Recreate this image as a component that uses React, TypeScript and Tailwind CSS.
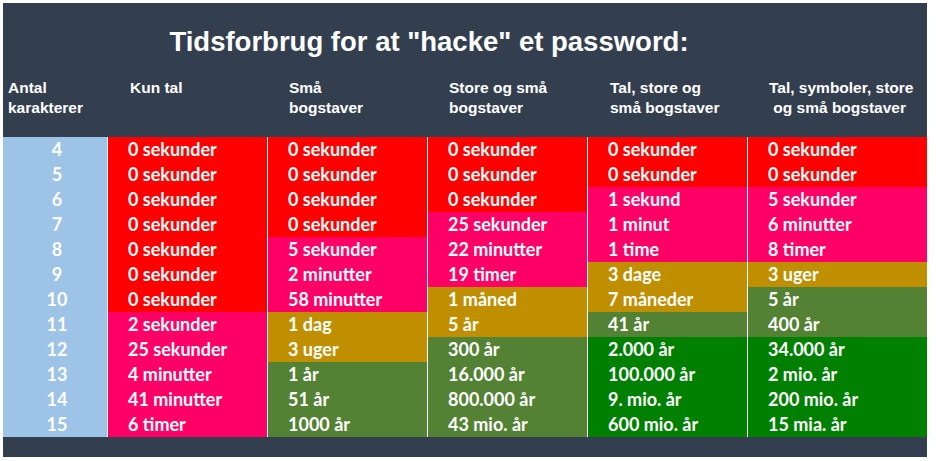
const R = 'bg-[#ff0000]';
const P = 'bg-[#ff0066]';
const G = 'bg-[#bf8f00]';
const O = 'bg-[#548235]';
const N = 'bg-[#008000]';

type Cell = { text: string; bg: string };

const COLUMNS: { width: string; cells: Cell[] }[] = [
    {
        width: 'w-[160px]',
        cells: [
            { text: '0 sekunder', bg: R },
            { text: '0 sekunder', bg: R },
            { text: '0 sekunder', bg: R },
            { text: '0 sekunder', bg: R },
            { text: '0 sekunder', bg: R },
            { text: '0 sekunder', bg: R },
            { text: '0 sekunder', bg: R },
            { text: '2 sekunder', bg: P },
            { text: '25 sekunder', bg: P },
            { text: '4 minutter', bg: P },
            { text: '41 minutter', bg: P },
            { text: '6 timer', bg: P },
        ],
    },
    {
        width: 'w-[160px]',
        cells: [
            { text: '0 sekunder', bg: R },
            { text: '0 sekunder', bg: R },
            { text: '0 sekunder', bg: R },
            { text: '0 sekunder', bg: R },
            { text: '5 sekunder', bg: P },
            { text: '2 minutter', bg: P },
            { text: '58 minutter', bg: P },
            { text: '1 dag', bg: G },
            { text: '3 uger', bg: G },
            { text: '1 år', bg: O },
            { text: '51 år', bg: O },
            { text: '1000 år', bg: O },
        ],
    },
    {
        width: 'w-[160px]',
        cells: [
            { text: '0 sekunder', bg: R },
            { text: '0 sekunder', bg: R },
            { text: '0 sekunder', bg: R },
            { text: '25 sekunder', bg: P },
            { text: '22 minutter', bg: P },
            { text: '19 timer', bg: P },
            { text: '1 måned', bg: G },
            { text: '5 år', bg: G },
            { text: '300 år', bg: O },
            { text: '16.000 år', bg: O },
            { text: '800.000 år', bg: O },
            { text: '43 mio. år', bg: O },
        ],
    },
    {
        width: 'w-[160px]',
        cells: [
            { text: '0 sekunder', bg: R },
            { text: '0 sekunder', bg: R },
            { text: '1 sekund', bg: P },
            { text: '1 minut', bg: P },
            { text: '1 time', bg: P },
            { text: '3 dage', bg: G },
            { text: '7 måneder', bg: G },
            { text: '41 år', bg: O },
            { text: '2.000 år', bg: N },
            { text: '100.000 år', bg: N },
            { text: '9. mio. år', bg: N },
            { text: '600 mio. år', bg: N },
        ],
    },
    {
        width: 'w-[180px]',
        cells: [
            { text: '0 sekunder', bg: R },
            { text: '0 sekunder', bg: R },
            { text: '5 sekunder', bg: P },
            { text: '6 minutter', bg: P },
            { text: '8 timer', bg: P },
            { text: '3 uger', bg: G },
            { text: '5 år', bg: O },
            { text: '400 år', bg: O },
            { text: '34.000 år', bg: N },
            { text: '2 mio. år', bg: N },
            { text: '200 mio. år', bg: N },
            { text: '15 mia. år', bg: N },
        ],
    },
];

const HEADERS = [
    { width: 'w-[104px] pl-[5px]', lines: ['Antal', 'karakterer'] },
    { width: 'w-[160px] pl-[23px]', lines: ['Kun tal'] },
    { width: 'w-[160px] pl-[22px]', lines: ['Små', 'bogstaver'] },
    { width: 'w-[160px] pl-[22px]', lines: ['Store og små', 'bogstaver'] },
    { width: 'w-[160px] pl-[23px]', lines: ['Tal, store og', 'små bogstaver'] },
    { width: 'w-[180px] pl-[22px]', lines: ['Tal, symboler, store', '\u00a0og små bogstaver'] },
];

const lengths = [4, 5, 6, 7, 8, 9, 10, 11, 12, 13, 14, 15];

export default function App() {
    return (
        <div className="h-[461px] w-[936px] bg-white pl-[3px] pt-[3px]">
            <div className="flex h-[454px] w-[924px] flex-col bg-[#333f4f] text-white">
                <div className="flex justify-center pr-[72px] pt-[23px] font-['Liberation_Sans',Arial,sans-serif] text-[27.5px] font-bold leading-[32px]">
                    Tidsforbrug for at "hacke" et password:
                </div>
                <div className="mt-[20px] flex font-['Liberation_Sans',Arial,sans-serif] text-[15.5px] font-bold leading-[20px]">
                    {HEADERS.map((h) => (
                        <div key={h.lines[0]} className={`${h.width} whitespace-pre`}>
                            {h.lines.map((l) => (
                                <div key={l}>{l}</div>
                            ))}
                        </div>
                    ))}
                </div>
                <div className="mt-[19px] flex font-['Lato','Open_Sans',sans-serif] text-[18px] font-bold">
                    <div className="flex w-[104px] flex-col bg-[#9dc3e6] pl-[4px]">
                        {lengths.map((n) => (
                            <div key={n} className="flex h-[25px] items-center justify-center">
                                {n}
                            </div>
                        ))}
                    </div>
                    {COLUMNS.map((col, i) => (
                        <div key={i} className={`${col.width} flex flex-col border-l border-white`}>
                            {col.cells.map((c, j) => (
                                <div key={j} className={`${c.bg} flex h-[25px] items-center pl-[20px]`}>
                                    {c.text}
                                </div>
                            ))}
                        </div>
                    ))}
                </div>
            </div>
        </div>
    );
}
